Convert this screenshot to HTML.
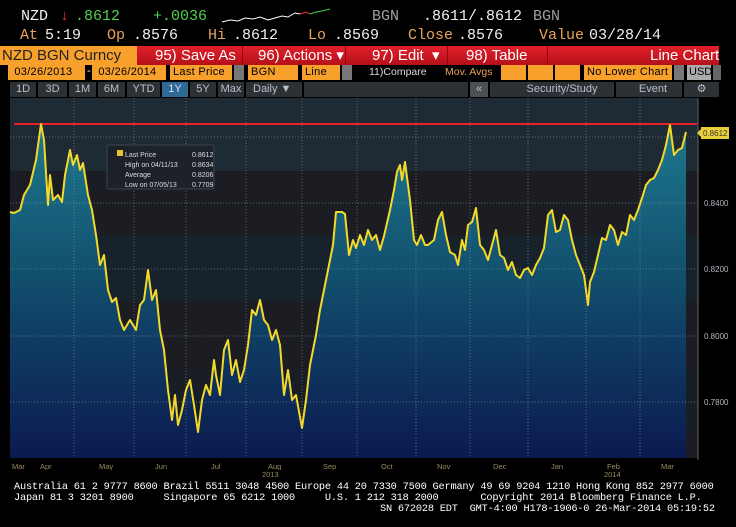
<!DOCTYPE html>
<html><head><meta charset="utf-8"><style>
*{margin:0;padding:0;box-sizing:border-box}
body{width:736px;height:527px;background:#000;overflow:hidden;font-family:"Liberation Sans",sans-serif;position:relative;color:#fff}
.a{position:absolute;white-space:nowrap}
.h{font-family:"Liberation Mono",monospace;font-size:15px;letter-spacing:0px}
.o{color:#e9a35a}.g{color:#4fd14f}.w{color:#f0f0f0}.gr{color:#a0a0a0}
.bar{position:absolute;top:46px;height:19px;background:linear-gradient(#e0202a,#b5101a);font-size:15px;color:#fff}
.ob{position:absolute;top:65px;height:15px;background:#f7a12c;font-size:11px;color:#000;font-family:"Liberation Sans",sans-serif;line-height:15px;padding-left:3px;overflow:hidden;letter-spacing:0.3px}
.tab{position:absolute;top:82px;height:15px;background:#2c3136;color:#b8c0c8;font-size:11px;line-height:15px;text-align:center}
.ft{font-family:"Liberation Mono",monospace;font-size:10.3px;color:#fff;letter-spacing:-0.2px}
.bt{position:absolute;top:46px;font-size:15px;line-height:19px}
</style></head><body>
<div class="a h w" style="left:21px;top:8px">NZD</div>
<div class="a h" style="left:60px;top:8px;color:#e33">↓</div>
<div class="a h g" style="left:75px;top:8px">.8612</div>
<div class="a h g" style="left:153px;top:8px">+.0036</div>
<svg class="a" style="left:220px;top:8px" width="112" height="18"><polyline fill="none" stroke="#fff" stroke-width="1" points="2,14 10,12 18,13 25,10 33,11 40,9 48,12 55,10 62,8 68,9 75,5 80,6"/><polyline fill="none" stroke="#e33" stroke-width="1" points="80,6 86,4 90,6"/><polyline fill="none" stroke="#4c4" stroke-width="1" points="90,6 96,4 102,3 110,1"/></svg>
<div class="a h gr" style="left:372px;top:8px">BGN</div>
<div class="a h w" style="left:423px;top:8px">.8611/.8612</div>
<div class="a h gr" style="left:533px;top:8px">BGN</div>
<div class="a h o" style="left:20px;top:27px">At</div><div class="a h w" style="left:45px;top:27px">5:19</div>
<div class="a h o" style="left:107px;top:27px">Op</div><div class="a h w" style="left:133px;top:27px">.8576</div>
<div class="a h o" style="left:208px;top:27px">Hi</div><div class="a h w" style="left:233px;top:27px">.8612</div>
<div class="a h o" style="left:308px;top:27px">Lo</div><div class="a h w" style="left:334px;top:27px">.8569</div>
<div class="a h o" style="left:408px;top:27px">Close</div><div class="a h w" style="left:458px;top:27px">.8576</div>
<div class="a h o" style="left:539px;top:27px">Value</div><div class="a h w" style="left:589px;top:27px">03/28/14</div>

<div class="bar" style="left:0;width:719px"></div>
<div class="a" style="left:0;top:46px;width:137px;height:19px;background:#f7a12c;color:#222;font-size:15px;line-height:19px;padding-left:2px">NZD BGN Curncy</div>
<div class="bt" style="left:155px">95) Save As</div>
<div class="bt" style="left:258px">96) Actions ▾</div>
<div class="bt" style="left:372px">97) Edit &nbsp;▾</div>
<div class="bt" style="left:466px">98) Table</div>
<div class="bt" style="left:650px">Line Chart</div>
<div class="a" style="left:242px;top:46px;width:1px;height:19px;background:#901"></div>
<div class="a" style="left:345px;top:46px;width:1px;height:19px;background:#901"></div>
<div class="a" style="left:447px;top:46px;width:1px;height:19px;background:#901"></div>
<div class="a" style="left:547px;top:46px;width:1px;height:19px;background:#901"></div>

<div class="ob" style="left:8px;width:77px">&nbsp;03/26/2013</div>
<div class="a" style="left:87px;top:65px;color:#fff;font-size:11px">-</div>
<div class="ob" style="left:92px;width:74px">&nbsp;03/26/2014</div>
<div class="ob" style="left:170px;width:62px">Last Price</div>
<div class="a" style="left:234px;top:65px;width:10px;height:15px;background:#777"></div>
<div class="ob" style="left:248px;width:50px">BGN</div>
<div class="ob" style="left:302px;width:38px">Line</div>
<div class="a" style="left:342px;top:65px;width:10px;height:15px;background:#777"></div>
<div class="a" style="left:369px;top:66px;font-size:10.5px;color:#ddd">11)Compare</div>
<div class="a" style="left:445px;top:66px;font-size:10.5px;color:#e9a35a">Mov. Avgs</div>
<div class="ob" style="left:501px;width:25px"></div>
<div class="ob" style="left:528px;width:25px"></div>
<div class="ob" style="left:555px;width:25px"></div>
<div class="ob" style="left:584px;width:88px">No Lower Chart</div>
<div class="a" style="left:674px;top:65px;width:10px;height:15px;background:#777"></div>
<div class="a" style="left:687px;top:65px;width:24px;height:15px;background:#aaa;font-size:11px;color:#000;padding-left:2px;line-height:15px">USD</div>
<div class="a" style="left:713px;top:65px;width:8px;height:15px;background:#666"></div>

<div class="tab" style="left:10px;width:26px">1D</div>
<div class="tab" style="left:38px;width:29px">3D</div>
<div class="tab" style="left:69px;width:27px">1M</div>
<div class="tab" style="left:98px;width:27px">6M</div>
<div class="tab" style="left:127px;width:33px">YTD</div>
<div class="tab" style="left:162px;width:26px;background:#2f6a96;color:#dde">1Y</div>
<div class="tab" style="left:190px;width:26px">5Y</div>
<div class="tab" style="left:218px;width:26px">Max</div>
<div class="tab" style="left:246px;width:56px;text-align:left;padding-left:7px">Daily ▼</div>
<div class="tab" style="left:304px;width:164px"></div>
<div class="tab" style="left:470px;width:18px;background:#4a5056">«</div>
<div class="tab" style="left:490px;width:124px;padding-left:20px">Security/Study</div>
<div class="tab" style="left:616px;width:66px;padding-left:8px">Event</div>
<div class="tab" style="left:684px;width:35px">⚙</div>

<svg class="a" style="left:0;top:98px" width="736" height="372" viewBox="0 98 736 372">
<defs><linearGradient id="f" x1="0" y1="120" x2="0" y2="458" gradientUnits="userSpaceOnUse"><stop offset="0" stop-color="#1e7a90"/><stop offset="0.45" stop-color="#12506e"/><stop offset="1" stop-color="#0b1a50"/></linearGradient></defs>
<rect x="10" y="98" width="688" height="360" fill="#1b1d22"/>
<rect x="10" y="98" width="688" height="73" fill="#1f2b34"/>
<rect x="10" y="236" width="688" height="66" fill="#18222a"/>
<rect x="10" y="369" width="688" height="66" fill="#191e26"/>
<polygon fill="url(#f)" points="10,458 10,212 14,213 20,210 24,195 30,185 36,160 41,124 44,140 48,205 50,175 53,200 58,195 62,202 65,175 70,150 73,165 77,155 80,170 83,163 88,195 92,210 96,235 100,265 104,255 108,290 112,302 116,298 120,320 124,330 130,320 136,330 140,305 144,300 148,270 152,300 156,290 160,330 164,350 168,390 172,420 175,395 178,425 182,410 186,390 190,380 194,405 198,432 202,400 206,385 210,395 214,360 216,375 220,395 224,350 228,340 232,375 236,360 240,382 244,370 248,345 252,310 256,315 260,300 264,320 268,325 272,340 276,330 280,345 284,395 288,370 292,400 296,395 302,428 306,400 310,365 316,335 320,310 324,290 328,270 333,245 336,212 342,212 345,214 349,255 353,240 356,248 360,235 364,245 368,230 372,240 376,235 380,250 384,236 390,210 394,190 397,172 400,165 402,180 405,162 410,200 414,240 417,245 421,235 425,245 428,245 434,240 438,220 442,212 446,235 450,252 455,255 458,265 462,240 465,250 468,225 472,222 476,208 480,245 484,250 488,260 492,245 496,230 500,255 504,258 508,270 512,262 516,275 520,278 524,270 528,268 532,275 536,265 540,258 544,248 548,215 552,210 556,232 560,230 564,215 568,220 572,240 576,255 580,265 584,275 588,305 590,282 594,272 598,255 602,238 606,240 610,225 614,230 618,245 622,232 626,235 630,215 634,220 638,210 642,198 646,185 650,180 654,178 658,170 662,160 666,145 670,125 674,155 678,150 682,148 686,132 686,458"/>
<g stroke="#8a96a0" stroke-width="1" stroke-dasharray="1,2" opacity="0.6">
<line x1="10" y1="137" x2="698" y2="137"/><line x1="10" y1="203" x2="698" y2="203"/><line x1="10" y1="269" x2="698" y2="269"/><line x1="10" y1="336" x2="698" y2="336"/><line x1="10" y1="402" x2="698" y2="402"/>
<line x1="74" y1="98" x2="74" y2="458"/><line x1="134" y1="98" x2="134" y2="458"/><line x1="186" y1="98" x2="186" y2="458"/><line x1="246" y1="98" x2="246" y2="458"/><line x1="302" y1="98" x2="302" y2="458"/><line x1="357" y1="98" x2="357" y2="458"/><line x1="416" y1="98" x2="416" y2="458"/><line x1="470" y1="98" x2="470" y2="458"/><line x1="528" y1="98" x2="528" y2="458"/><line x1="586" y1="98" x2="586" y2="458"/><line x1="640" y1="98" x2="640" y2="458"/>
</g>
<line x1="14" y1="124" x2="697" y2="124" stroke="#e8202a" stroke-width="2"/>
<polyline fill="none" stroke="#f4d92a" stroke-width="2" stroke-linejoin="round" points="10,212 14,213 20,210 24,195 30,185 36,160 41,124 44,140 48,205 50,175 53,200 58,195 62,202 65,175 70,150 73,165 77,155 80,170 83,163 88,195 92,210 96,235 100,265 104,255 108,290 112,302 116,298 120,320 124,330 130,320 136,330 140,305 144,300 148,270 152,300 156,290 160,330 164,350 168,390 172,420 175,395 178,425 182,410 186,390 190,380 194,405 198,432 202,400 206,385 210,395 214,360 216,375 220,395 224,350 228,340 232,375 236,360 240,382 244,370 248,345 252,310 256,315 260,300 264,320 268,325 272,340 276,330 280,345 284,395 288,370 292,400 296,395 302,428 306,400 310,365 316,335 320,310 324,290 328,270 333,245 336,212 342,212 345,214 349,255 353,240 356,248 360,235 364,245 368,230 372,240 376,235 380,250 384,236 390,210 394,190 397,172 400,165 402,180 405,162 410,200 414,240 417,245 421,235 425,245 428,245 434,240 438,220 442,212 446,235 450,252 455,255 458,265 462,240 465,250 468,225 472,222 476,208 480,245 484,250 488,260 492,245 496,230 500,255 504,258 508,270 512,262 516,275 520,278 524,270 528,268 532,275 536,265 540,258 544,248 548,215 552,210 556,232 560,230 564,215 568,220 572,240 576,255 580,265 584,275 588,305 590,282 594,272 598,255 602,238 606,240 610,225 614,230 618,245 622,232 626,235 630,215 634,220 638,210 642,198 646,185 650,180 654,178 658,170 662,160 666,145 670,125 674,155 678,150 682,148 686,132"/>
<line x1="698" y1="98" x2="698" y2="460" stroke="#666"/>
<rect x="701" y="127" width="28" height="12" fill="#e8cf3a"/><polygon points="697,133 701,129 701,137" fill="#e8cf3a"/>
<text x="703" y="136" font-size="8" fill="#333" font-family="Liberation Sans">0.8612</text>
<g font-size="8" fill="#b0b8c0" font-family="Liberation Sans">
<text x="704" y="206">0.8400</text><text x="704" y="272">0.8200</text><text x="704" y="339">0.8000</text><text x="704" y="405">0.7800</text>
</g>
<rect x="107" y="145" width="107" height="44" rx="2" fill="#1c2228" stroke="#3a4450"/>
<rect x="117" y="150" width="6" height="6" fill="#e8c42a"/>
<g font-size="7" fill="#d8dde2" font-family="Liberation Sans">
<text x="125" y="157">Last Price</text><text x="192" y="157">0.8612</text>
<text x="125" y="167">High on 04/11/13</text><text x="192" y="167">0.8634</text>
<text x="125" y="177">Average</text><text x="192" y="177">0.8206</text>
<text x="125" y="187">Low on 07/05/13</text><text x="192" y="187">0.7709</text>
</g>
<g font-size="7.5" fill="#9a8a60" font-family="Liberation Sans">
<text x="12" y="469">Mar</text><text x="40" y="469">Apr</text><text x="99" y="469">May</text><text x="155" y="469">Jun</text><text x="211" y="469">Jul</text><text x="268" y="469">Aug</text><text x="323" y="469">Sep</text><text x="381" y="469">Oct</text><text x="437" y="469">Nov</text><text x="493" y="469">Dec</text><text x="551" y="469">Jan</text><text x="607" y="469">Feb</text><text x="661" y="469">Mar</text>
</g>
</svg>
<div class="a" style="left:262px;top:470px;font-size:7.5px;color:#9a8a60">2013</div>
<div class="a" style="left:604px;top:470px;font-size:7.5px;color:#9a8a60">2014</div>
<div class="a ft" style="left:14px;top:481px">Australia 61 2 9777 8600 Brazil 5511 3048 4500 Europe 44 20 7330 7500 Germany 49 69 9204 1210 Hong Kong 852 2977 6000</div>
<div class="a ft" style="left:14px;top:492px">Japan 81 3 3201 8900 &nbsp;&nbsp;&nbsp;&nbsp;Singapore 65 6212 1000 &nbsp;&nbsp;&nbsp;&nbsp;U.S. 1 212 318 2000 &nbsp;&nbsp;&nbsp;&nbsp;&nbsp;&nbsp;Copyright 2014 Bloomberg Finance L.P.</div>
<div class="a ft" style="left:380px;top:503px">SN 672028 EDT &nbsp;GMT-4:00 H178-1906-0 26-Mar-2014 05:19:52</div>
</body></html>
